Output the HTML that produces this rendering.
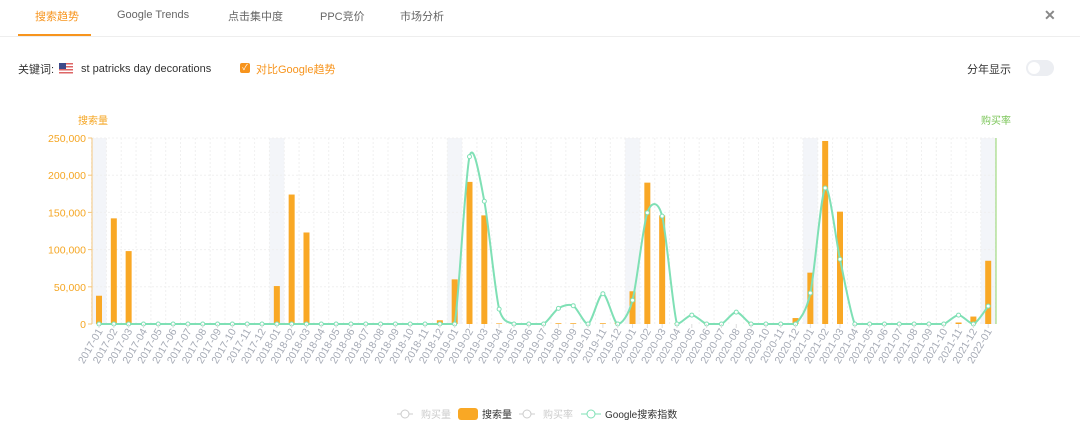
<!DOCTYPE html>
<html><head><meta charset="utf-8"><style>
body{margin:0;width:1080px;height:439px;background:#fff;font-family:"Liberation Sans","Noto Sans CJK SC",sans-serif;overflow:hidden;position:relative}
.tabs{position:absolute;top:0;left:0;right:0;height:36px;border-bottom:1px solid #eee}
.tab{position:absolute;top:8px;font-size:11px;color:#666}
.act{color:#f7941d}
.ul{position:absolute;left:18px;top:34px;width:73px;height:2px;background:#f7941d}
.x{position:absolute;left:1044px;top:7px;font-size:14px;font-weight:bold;color:#888}
.t{position:absolute;font-size:11px;color:#333}
</style></head><body>
<div class="tabs">
<div class="tab act" style="left:35px">搜索趋势</div>
<div class="tab" style="left:117px;top:9px">Google Trends</div>
<div class="tab" style="left:228px">点击集中度</div>
<div class="tab" style="left:320px">PPC竞价</div>
<div class="tab" style="left:400px">市场分析</div>
<div class="ul"></div>
</div>
<div class="x">✕</div>
<div class="t" style="left:18px;top:61px">关键词:</div>
<svg style="position:absolute;left:59px;top:63px" width="14" height="11"><rect width="14" height="11" fill="#fff"/><g fill="#d66"><rect y="0" width="14" height="1.5"/><rect y="3" width="14" height="1.5"/><rect y="6" width="14" height="1.5"/><rect y="9" width="14" height="1.5"/></g><rect width="7" height="6" fill="#3c4a8a"/></svg>
<div class="t" style="left:81px;top:63px">st patricks day decorations</div>
<div style="position:absolute;left:240px;top:63px;width:10px;height:10px;border-radius:2px;background:#f7941d;color:#fff;font-size:8px;line-height:10px;text-align:center">✓</div>
<div class="t" style="left:256px;top:61px;color:#f7941d">对比Google趋势</div>
<div class="t" style="left:967px;top:61px">分年显示</div>
<div style="position:absolute;left:1026px;top:60px;width:28px;height:16px;border-radius:8px;background:#eceef2"><div style="position:absolute;left:2px;top:2px;width:12px;height:12px;border-radius:6px;background:#fff"></div></div>
<svg id="c" width="1080" height="439" style="position:absolute;left:0;top:0"></svg>
<script>
var s='';const X0=99,DX=14.82,Y0=324,K=186/250000;
function x(i){return X0+i*DX}function y(v){return Y0-v*K}
[0,12,24,36,48,60].forEach(i=>{s+=`<rect x="${x(i)-7.4}" y="138" width="14.8" height="186" fill="#f3f5f9"/>`});
for(let i=0;i<=61;i++){let xx=x(i)-7.4;s+=`<line x1="${xx}" y1="138" x2="${xx}" y2="324" stroke="#f0f0f0" stroke-dasharray="2,2"/>`}
for(let v=50000;v<=250000;v+=50000)s+=`<line x1="92" y1="${y(v)}" x2="996" y2="${y(v)}" stroke="#f0f0f0" stroke-dasharray="2,2"/>`;
s+=`<line x1="92" y1="138" x2="92" y2="324" stroke="#f5c77e"/><line x1="996" y1="138" x2="996" y2="324" stroke="#91d46a"/>`;
for(let v=0;v<=250000;v+=50000){s+=`<line x1="88" y1="${y(v)}" x2="92" y2="${y(v)}" stroke="#f5c77e"/><text x="86" y="${y(v)+4}" text-anchor="end" font-size="10.5" fill="#f5a623">${v?v.toLocaleString('en-US'):0}</text>`}
s+=`<text x="78" y="124" font-size="10" fill="#f5a623">搜索量</text><text x="981" y="124" font-size="10" fill="#7cc65a">购买率</text>`;
var bars={0:38000,1:142000,2:98000,12:51000,13:174000,14:123000,23:5000,24:60000,25:191000,26:146000,27:800,31:1000,32:1000,34:1000,35:2000,36:44000,37:190000,38:146000,39:500,41:1000,44:1000,47:8000,48:69000,49:246000,50:151000,58:2000,59:10000,60:85000};
for(let k in bars){s+=`<rect x="${x(+k)-3}" y="${y(bars[k])}" width="6" height="${bars[k]*K}" fill="#f9a825"/>`}
var g=new Array(61).fill(0);Object.assign(g,{25:225000,26:165000,27:20000,31:21000,32:24600,34:40700,36:32000,37:149600,38:145000,40:12000,43:16000,48:41600,49:182800,50:87000,58:12000,60:24000});
var P=g.map((v,i)=>[x(i),y(v)]),d=`M${P[0][0]},${P[0][1]}`;
for(let i=0;i<60;i++){let p0=P[Math.max(0,i-1)],p1=P[i],p2=P[i+1],p3=P[Math.min(60,i+2)],t=0.14;
d+=`C${p1[0]+(p2[0]-p0[0])*t},${Math.min(Y0,p1[1]+(p2[1]-p0[1])*t)} ${p2[0]-(p3[0]-p1[0])*t},${Math.min(Y0,p2[1]-(p3[1]-p1[1])*t)} ${p2[0]},${p2[1]}`}
s+=`<path d="${d}" fill="none" stroke="#7fe0b5" stroke-width="2"/>`;
P.forEach(p=>s+=`<circle cx="${p[0]}" cy="${p[1]}" r="2" fill="#fff" stroke="#7fe0b5" stroke-width="1"/>`);
for(let i=0;i<61;i++){let yr=2017+Math.floor(i/12),m=String(i%12+1).padStart(2,'0');s+=`<line x1="${x(i)}" y1="324" x2="${x(i)}" y2="328" stroke="#ddd"/><text transform="translate(${x(i)+4},331) rotate(-60)" text-anchor="end" font-size="10.5" fill="#a5aab5">${yr}-${m}</text>`}
s+=`<line x1="397" y1="414" x2="413" y2="414" stroke="#ccc"/><circle cx="405" cy="414" r="4" fill="#fff" stroke="#ccc"/><text x="421" y="418" font-size="10" fill="#ccc">购买量</text>`;
s+=`<rect x="458" y="408" width="20" height="12" rx="3" fill="#f9a825"/><text x="482" y="418" font-size="10" fill="#333">搜索量</text>`;
s+=`<line x1="519" y1="414" x2="535" y2="414" stroke="#ccc"/><circle cx="527" cy="414" r="4" fill="#fff" stroke="#ccc"/><text x="543" y="418" font-size="10" fill="#ccc">购买率</text>`;
s+=`<line x1="581" y1="414" x2="601" y2="414" stroke="#7fe0b5"/><circle cx="591" cy="414" r="4" fill="#fff" stroke="#7fe0b5"/><text x="605" y="418" font-size="10" fill="#333">Google搜索指数</text>`;
document.getElementById('c').innerHTML=s;
</script>
</body></html>
